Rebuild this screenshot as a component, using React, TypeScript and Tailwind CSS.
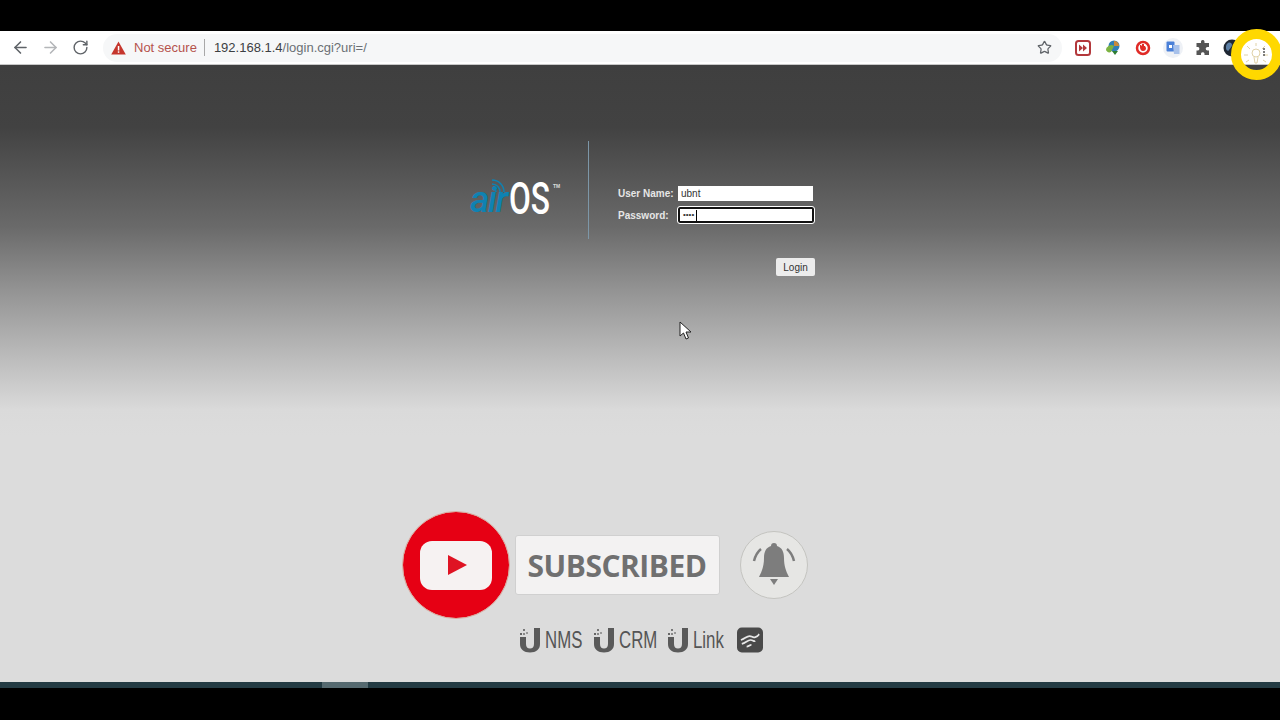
import { ArrowLeft, ArrowRight, RotateCw, Star } from 'lucide-react';

function UMark() {
  return (
    <svg width="24" height="26" viewBox="0 0 24 26" className="shrink-0">
      <path d="M1 10h6v7c0 3 1.500 4.500 4 4.500s4-1.500 4-4.500V1h6v16c0 5.500-4 8.500-10 8.500S1 22.500 1 17z" fill="#5a5a5a" />
      <rect x="1" y="6" width="2" height="2" fill="#666" />
      <rect x="4" y="2" width="2" height="2" fill="#777" />
      <rect x="4" y="6" width="2" height="2" fill="#888" />
      <rect x="7" y="5" width="2" height="2" fill="#999" />
    </svg>
  );
}

function ProductLabel({ name, className }: { name: string; className: string }) {
  return (
    <div className={`flex items-center gap-[2px] ${className}`}>
      <UMark />
      <span className="inline-block origin-left scale-x-[0.7] text-[24px] leading-none text-[#555555]">{name}</span>
    </div>
  );
}

export default function App() {
  return (
    <div className="relative flex h-[720px] w-[1280px] flex-col overflow-hidden bg-black font-['Liberation_Sans',sans-serif]">
      <div className="h-[31px] shrink-0 bg-black" />

      {/* browser toolbar */}
      <div className="flex h-[34px] shrink-0 items-center border-b border-[#c8c8c8] bg-white pl-[11px]">
        <ArrowLeft size={19} strokeWidth={2} className="text-[#5f6368]" />
        <ArrowRight size={19} strokeWidth={2} className="ml-[11px] text-[#b4b6b9]" />
        <RotateCw size={17} strokeWidth={2} className="ml-[12px] text-[#5f6368]" />
        <div className="ml-[14px] flex h-[28px] w-[959px] items-center rounded-full bg-[#f6f7f8] pl-[8px] pr-[10px]">
          <svg width="15" height="14" viewBox="0 0 15 14" className="shrink-0">
            <path d="M7.500 .5 14.800 13.500H.2z" fill="#c5352c" />
            <rect x="6.800" y="5" width="1.500" height="4.500" fill="#fff" />
            <rect x="6.800" y="10.300" width="1.500" height="1.500" fill="#fff" />
          </svg>
          <span className="ml-[8px] text-[13px] text-[#b5534c]">Not secure</span>
          <span className="ml-[7px] h-[17px] w-px bg-[#a8a8a8]" />
          <span className="ml-[9px] text-[13px] text-[#3c4043]">192.168.1.4</span>
          <span className="text-[13px] text-[#6b7075]">/login.cgi?uri=/</span>
          <Star size={15} strokeWidth={2} className="ml-auto text-[#5f6368]" />
        </div>
        <div className="ml-[13px] flex items-center gap-[14px]">
          <svg width="16" height="16" viewBox="0 0 16 16">
            <rect x="1" y="1" width="14" height="14" rx="2.500" fill="#fff" stroke="#b3383c" strokeWidth="2" />
            <path d="M4 4.500 8 8 4 11.500zM8 4.500 12 8 8 11.500z" fill="#b3383c" />
          </svg>
          <svg width="16" height="16" viewBox="0 0 16 16">
            <circle cx="9" cy="6" r="5.500" fill="#2f7fb5" />
            <path d="M1 9c2-4 6-5 8-3l-3 6C4 13 1 12 1 9z" fill="#7cb342" />
            <path d="M7 11h6l-3 4z" fill="#2e7d32" />
            <path d="M9 1c3 0 5 2 5 5H9z" fill="#c98a3a" />
          </svg>
          <svg width="16" height="16" viewBox="0 0 16 16">
            <circle cx="8" cy="8" r="6" fill="#fff" stroke="#e02b27" strokeWidth="2.500" />
            <path d="M5 7V5h1l1 1V4h2v2l1 0 1 2c0 2-1 3-3 3S5 9 5 7z" fill="#e02b27" />
          </svg>
          <div className="flex h-[16px] w-[16px] items-center justify-center">
            <svg width="20" height="20" viewBox="0 0 20 20" className="shrink-0">
              <circle cx="10" cy="10" r="10" fill="#eef1f6" />
              <rect x="3.500" y="3.500" width="8" height="10" rx="1" fill="#4a80d8" />
              <path d="M10 7h6.500v9H11z" fill="#a8c1ea" />
              <rect x="6" y="7" width="3" height="3" fill="#fff" />
            </svg>
          </div>
          <svg width="16" height="16" viewBox="0 0 16 16" className="text-[#555]">
            <path
              d="M6 1.500a1.800 1.800 0 0 1 3.500 0V3H14v4h-1.500a1.800 1.800 0 0 0 0 3.600H14V15H9.500v-1.400a1.800 1.800 0 0 0-3.500 0V15H1.500v-4.500H3a1.800 1.800 0 0 0 0-3.500H1.500V3H6z"
              fill="currentColor"
            />
          </svg>
          <svg width="18" height="18" viewBox="0 0 18 18" className="ml-[-2px]">
            <circle cx="9" cy="9" r="8.500" fill="#1f2733" />
            <path d="M5 4c2-1 4 0 4 2s-2 3-3 5-3 0-3-2 0-4 2-5z" fill="#5b7fa6" />
          </svg>
        </div>
      </div>

      {/* airOS login page */}
      <main className="flex min-h-0 flex-1 flex-col items-center bg-[linear-gradient(#3f3f3f_0px,#424242_62px,#6a6a6a_162px,#959595_228px,#bdbdbd_295px,#dadada_345px,#dcdcdc_370px,#dcdcdc_100%)] pt-[76px]">
        <div className="ml-[5px] flex w-[345px]">
          <div className="flex h-[98px] w-[118px] items-start pt-[38px]">
            <div className="relative flex h-[40px] items-center">
              <span className="inline-block w-[39px] font-['Roboto'] text-[37px] font-medium italic leading-none tracking-[-1.5px] text-[#0f82b2]">
                air
              </span>
              <span className="inline-block w-[40px] origin-left scale-x-[0.72] font-['Roboto'] text-[44px] font-medium leading-none text-white">
                OS
              </span>
              <span className="absolute left-[83px] top-[5px] text-[5px] font-bold leading-none text-[#dddddd]">TM</span>
              <svg width="14" height="15" viewBox="0 0 14 15" className="absolute left-[21px] top-[-1px]">
                <g fill="none" stroke="#0f82b2" strokeWidth="1.500">
                  <path d="M1 10a4 4 0 0 1 4 4" />
                  <path d="M1 6a8 8 0 0 1 8 8" />
                  <path d="M1 2a12 12 0 0 1 12 12" />
                </g>
              </svg>
            </div>
          </div>
          <div className="h-[98px] w-px bg-[#7d97a8]" />
          <div className="flex-1 pl-[29px] pt-[45px]">
            <div className="flex h-[15px] items-center">
              <span className="w-[60px] whitespace-nowrap text-[10px] font-bold text-[#e6e6e6]">User Name:</span>
              <div className="flex h-[15px] w-[135px] items-center bg-white pl-[3px] text-[10px] text-[#333]">ubnt</div>
            </div>
            <div className="mt-[6px] flex h-[16px] items-center">
              <span className="w-[60px] whitespace-nowrap text-[10px] font-bold text-[#e6e6e6]">Password:</span>
              <div className="flex h-[16px] w-[136px] items-center rounded-[2px] border-2 border-[#111] bg-white pl-[3px] text-[8px] leading-none text-[#333] outline outline-1 outline-white">
                ••••
                <span className="ml-[2px] h-[11px] w-px bg-black" />
              </div>
            </div>
            <div className="mt-[35px] flex justify-end">
              <button className="h-[18px] w-[39px] rounded-[2px] bg-[#ececec] text-[10px] text-[#333]">Login</button>
            </div>
          </div>
        </div>

        {/* subscribe overlay from the video */}
        <div className="mt-[236px] ml-[-70px] flex h-[106px] items-center">
          <div className="flex h-[106px] w-[106px] items-center justify-center rounded-full bg-[#e60014] outline outline-1 outline-[#d9a89c]">
            <div className="flex h-[49px] w-[72px] items-center justify-center rounded-[12px] bg-[#f6f2f2]">
              <svg width="19" height="20" viewBox="0 0 19 20" className="ml-[3px]">
                <path d="M0 0 19 10 0 20z" fill="#df1323" />
              </svg>
            </div>
          </div>
          <div className="ml-[6px] flex h-[60px] w-[205px] items-center justify-center rounded-[3px] border border-[#d0d0d0] bg-[#f3f2f2] font-['Open_Sans'] text-[30px] font-bold tracking-[-0.5px] text-[#707070]">
            SUBSCRIBED
          </div>
          <div className="ml-[20px] flex h-[68px] w-[68px] items-center justify-center rounded-full border border-[#c4c4c0] bg-[#e6e6e4]">
            <svg width="48" height="48" viewBox="0 0 48 48">
              <path
                d="M24 2c2 0 3 1 3 3 5 1.500 7 6 7 12 0 8 2 13 5 19H9c3-6 5-11 5-19 0-6 2-10.500 7-12 0-2 1-3 3-3z"
                fill="#7d7d7d"
              />
              <path d="M20 38h8l-4 6z" fill="#7d7d7d" />
              <path d="M11 8Q6 12 4 20M37 8q5 4 7 12" stroke="#7d7d7d" strokeWidth="2.500" fill="none" />
            </svg>
          </div>
        </div>

        <div className="mt-[9px] ml-[2px] flex h-[26px] w-[244px] items-center">
          <ProductLabel name="NMS" className="w-[74px]" />
          <ProductLabel name="CRM" className="w-[74px]" />
          <ProductLabel name="Link" className="w-[70px]" />
          <svg width="27" height="26" viewBox="0 0 27 26">
            <rect width="27" height="26" rx="5" fill="#4a4a4a" />
            <g fill="none" stroke="#e8e8e8" strokeWidth="1.800">
              <path d="M4 13c4-1 6-4 9-4s3 2 6 1 3-2 4-3" />
              <path d="M5 17c4-1 6-4 9-4s3 2 5 1" />
              <path d="M10 20c2 0 3-2 5-2" />
            </g>
          </svg>
        </div>
      </main>

      {/* player scrub bar */}
      <div className="flex h-[6px] shrink-0 bg-[#233b43]">
        <div className="ml-[322px] h-full w-[46px] bg-[#566a70]" />
      </div>
      <div className="h-[32px] shrink-0 bg-black" />

      {/* cursor highlight ring */}
      <div className="absolute left-[1231px] top-[29px] h-[51px] w-[51px] rounded-full border-[10px] border-[#ffd800]">
        <svg width="31" height="31" viewBox="0 0 31 31" className="absolute left-0 top-0">
          <g stroke="#e0d2a8" strokeWidth="1" fill="none">
            <path d="M15 7V4M9 10 6 7M21 10l3-3M7 16H3M23 16h4M8 21l-3 2M22 21l3 2" />
            <circle cx="15" cy="14" r="4" />
            <path d="M13 18l1 6h2l1-6" />
          </g>
        </svg>
        <div className="absolute left-[22px] top-[9px] flex flex-col gap-[1px]">
          <span className="h-[2px] w-[2px] rounded-full bg-[#555]" />
          <span className="h-[2px] w-[2px] rounded-full bg-[#555]" />
          <span className="h-[2px] w-[2px] rounded-full bg-[#555]" />
        </div>
      </div>

      {/* mouse pointer */}
      <svg width="14" height="20" viewBox="0 0 14 20" className="absolute left-[679px] top-[321px]">
        <path d="M1 1v14l3.500-3 2.500 6 2.500-1-2.500-6H12z" fill="#fff" stroke="#222" strokeWidth="1" />
      </svg>
    </div>
  );
}
